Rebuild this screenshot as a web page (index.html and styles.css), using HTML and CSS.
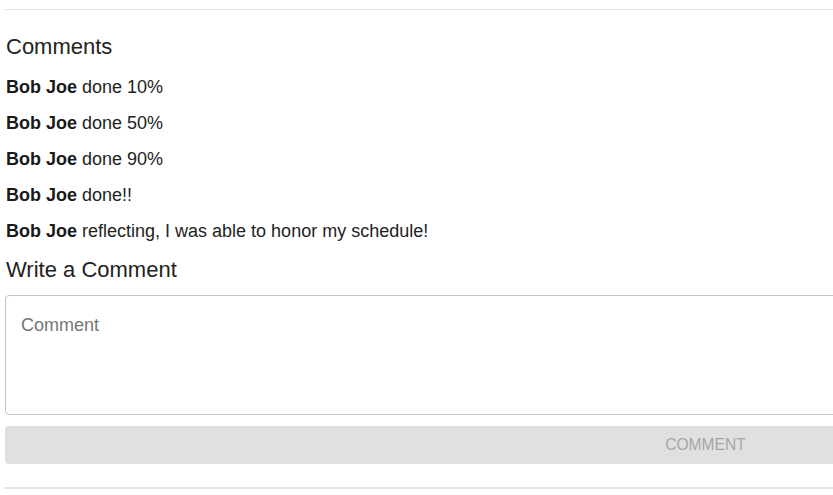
FILE: index.html
```html
<!DOCTYPE html>
<html lang="en">
<head>
<meta charset="utf-8">
<title>Comments</title>
<link rel="stylesheet" href="styles.css">
</head>
<body>
<div class="page">
  <div class="rule-top"></div>
  <h2 class="section-title">Comments</h2>
  <div class="comment-list">
    <p class="comment"><strong>Bob Joe</strong> done 10%</p>
    <p class="comment"><strong>Bob Joe</strong> done 50%</p>
    <p class="comment"><strong>Bob Joe</strong> done 90%</p>
    <p class="comment"><strong>Bob Joe</strong> done!!</p>
    <p class="comment"><strong>Bob Joe</strong> reflecting, I was able to honor my schedule!</p>
  </div>
  <h2 class="section-title write-title">Write a Comment</h2>
  <textarea class="comment-input" placeholder="Comment"></textarea>
  <button class="comment-btn" disabled>Comment</button>
  <div class="rule-bottom"></div>
</div>
</body>
</html>
```

FILE: styles.css
```css
html, body {
  margin: 0;
  padding: 0;
  overflow: hidden;
  background: #ffffff;
}

body {
  font-family: "Liberation Sans", Arial, sans-serif;
  color: #212121;
}

.page {
  width: 1401px;
  padding-left: 5px;
  display: flex;
  flex-direction: column;
}

.rule-top {
  margin-top: 9px;
  border-top: 1px solid #e2e2e2;
}

.section-title {
  margin: 24px 0 0 0;
  font-size: 22px;
  line-height: 26px;
  font-weight: normal;
  color: #222222;
  padding-left: 1px;
}

.comment-list {
  display: flex;
  flex-direction: column;
  gap: 16px;
  margin-top: 17px;
}

.comment {
  margin: 0;
  font-size: 18px;
  line-height: 20px;
  color: #222222;
  padding-left: 1px;
}

.comment strong {
  font-weight: bold;
  color: #1a1a1a;
}

.write-title {
  margin-top: 16px;
}

.comment-input {
  margin-top: 12px;
  box-sizing: border-box;
  width: 100%;
  height: 120px;
  padding: 19px 15px;
  border: 1px solid #c4c4c4;
  border-radius: 4px;
  font-family: "Liberation Sans", Arial, sans-serif;
  font-size: 18px;
  line-height: 20px;
  color: #222222;
  resize: none;
  outline: none;
}

.comment-input::placeholder {
  color: #757575;
  opacity: 1;
}

.comment-btn {
  margin-top: 11px;
  height: 38px;
  width: 100%;
  border: none;
  border-radius: 4px;
  background: #e0e0e0;
  color: #a6a6a6;
  font-family: "Liberation Sans", Arial, sans-serif;
  font-size: 15.6px;
  text-transform: uppercase;
  display: flex;
  align-items: center;
  justify-content: center;
  padding: 0;
}

.rule-bottom {
  margin-top: 23px;
  border-top: 2px solid #e2e2e2;
}
```
